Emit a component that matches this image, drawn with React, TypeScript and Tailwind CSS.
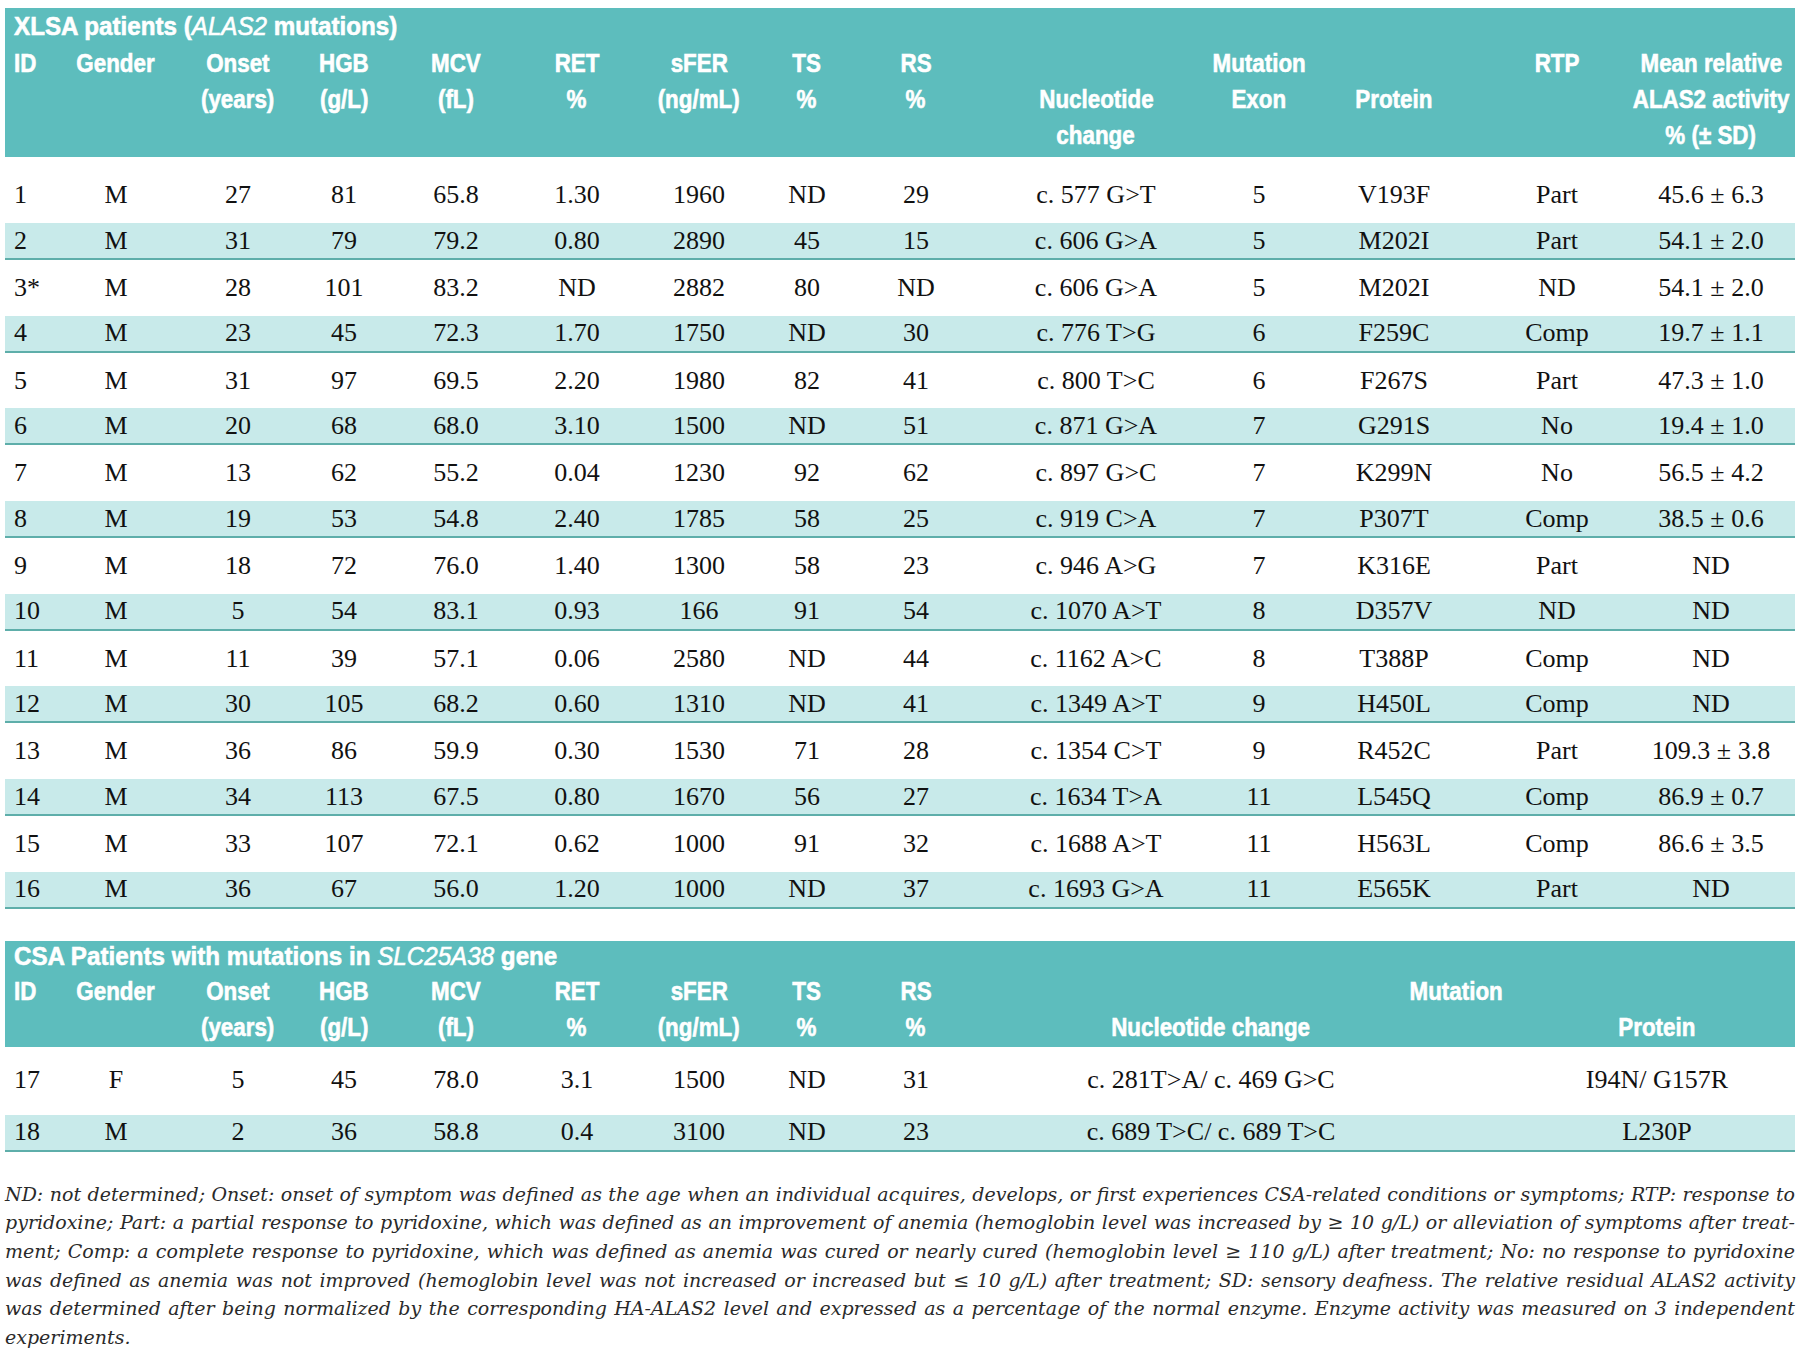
import React from "react";

const headFont = "font-['Liberation_Sans',sans-serif]";
const bodyFont = "font-['Liberation_Serif',serif]";

const grid1 =
  "grid grid-cols-[50px_122px_122px_90px_134px_108px_136px_80px_138px_222px_104px_166px_160px_148px]";
const grid2 =
  "grid grid-cols-[50px_122px_122px_90px_134px_108px_136px_80px_138px_452px_82px_276px]";

// header lines per column (3 lines for the first table)
const head1: string[][] = [
  ["ID", "", ""],
  ["Gender", "", ""],
  ["Onset", "(years)", ""],
  ["HGB", "(g/L)", ""],
  ["MCV", "(fL)", ""],
  ["RET", "%", ""],
  ["sFER", "(ng/mL)", ""],
  ["TS", "%", ""],
  ["RS", "%", ""],
  ["", "Nucleotide", "change"],
  ["Mutation", "Exon", ""],
  ["", "Protein", ""],
  ["RTP", "", ""],
  ["Mean relative", "ALAS2 activity", "% (± SD)"],
];

const head2: string[][] = [
  ["ID", ""],
  ["Gender", ""],
  ["Onset", "(years)"],
  ["HGB", "(g/L)"],
  ["MCV", "(fL)"],
  ["RET", "%"],
  ["sFER", "(ng/mL)"],
  ["TS", "%"],
  ["RS", "%"],
];

const rows1: string[][] = [
  ["1", "M", "27", "81", "65.8", "1.30", "1960", "ND", "29", "c. 577 G>T", "5", "V193F", "Part", "45.6 ± 6.3"],
  ["2", "M", "31", "79", "79.2", "0.80", "2890", "45", "15", "c. 606 G>A", "5", "M202I", "Part", "54.1 ± 2.0"],
  ["3*", "M", "28", "101", "83.2", "ND", "2882", "80", "ND", "c. 606 G>A", "5", "M202I", "ND", "54.1 ± 2.0"],
  ["4", "M", "23", "45", "72.3", "1.70", "1750", "ND", "30", "c. 776 T>G", "6", "F259C", "Comp", "19.7 ± 1.1"],
  ["5", "M", "31", "97", "69.5", "2.20", "1980", "82", "41", "c. 800 T>C", "6", "F267S", "Part", "47.3 ± 1.0"],
  ["6", "M", "20", "68", "68.0", "3.10", "1500", "ND", "51", "c. 871 G>A", "7", "G291S", "No", "19.4 ± 1.0"],
  ["7", "M", "13", "62", "55.2", "0.04", "1230", "92", "62", "c. 897 G>C", "7", "K299N", "No", "56.5 ± 4.2"],
  ["8", "M", "19", "53", "54.8", "2.40", "1785", "58", "25", "c. 919 C>A", "7", "P307T", "Comp", "38.5 ± 0.6"],
  ["9", "M", "18", "72", "76.0", "1.40", "1300", "58", "23", "c. 946 A>G", "7", "K316E", "Part", "ND"],
  ["10", "M", "5", "54", "83.1", "0.93", "166", "91", "54", "c. 1070 A>T", "8", "D357V", "ND", "ND"],
  ["11", "M", "11", "39", "57.1", "0.06", "2580", "ND", "44", "c. 1162 A>C", "8", "T388P", "Comp", "ND"],
  ["12", "M", "30", "105", "68.2", "0.60", "1310", "ND", "41", "c. 1349 A>T", "9", "H450L", "Comp", "ND"],
  ["13", "M", "36", "86", "59.9", "0.30", "1530", "71", "28", "c. 1354 C>T", "9", "R452C", "Part", "109.3 ± 3.8"],
  ["14", "M", "34", "113", "67.5", "0.80", "1670", "56", "27", "c. 1634 T>A", "11", "L545Q", "Comp", "86.9 ± 0.7"],
  ["15", "M", "33", "107", "72.1", "0.62", "1000", "91", "32", "c. 1688 A>T", "11", "H563L", "Comp", "86.6 ± 3.5"],
  ["16", "M", "36", "67", "56.0", "1.20", "1000", "ND", "37", "c. 1693 G>A", "11", "E565K", "Part", "ND"],
];

const rows2: string[][] = [
  ["17", "F", "5", "45", "78.0", "3.1", "1500", "ND", "31", "c. 281T>A/ c. 469 G>C", "", "I94N/ G157R"],
  ["18", "M", "2", "36", "58.8", "0.4", "3100", "ND", "23", "c. 689 T>C/ c. 689 T>C", "", "L230P"],
];

const notes = [
  "ND: not determined; Onset: onset of symptom was defined as the age when an individual acquires, develops, or first experiences CSA-related conditions or symptoms; RTP: response to",
  "pyridoxine; Part: a partial response to pyridoxine, which was defined as an improvement of anemia (hemoglobin level was increased by ≥ 10 g/L) or alleviation of symptoms after treat-",
  "ment; Comp: a complete response to pyridoxine, which was defined as anemia was cured or nearly cured (hemoglobin level ≥ 110 g/L) after treatment; No: no response to pyridoxine",
  "was defined as anemia was not improved (hemoglobin level was not increased or increased but ≤ 10 g/L) after treatment; SD: sensory deafness. The relative residual ALAS2 activity",
  "was determined after being normalized by the corresponding HA-ALAS2 level and expressed as a percentage of the normal enzyme. Enzyme activity was measured on 3 independent",
];

// condensed bold heading text (no narrow face installed, so squeeze Liberation Sans)
function HeadLine({
  text,
  left,
  h,
  title,
}: {
  text: React.ReactNode;
  left?: boolean;
  h: string;
  title?: boolean;
}) {
  return (
    <div className={`flex whitespace-nowrap ${h} ${left ? "justify-start pl-[9px]" : "justify-center"}`}>
      <span
        className={`inline-block ${title ? "scale-x-[0.93]" : "scale-x-[0.86]"} ${left ? "origin-left" : "origin-center"}`}
      >
        {text}
      </span>
    </div>
  );
}

function DataRow({ cells, grid, kind }: { cells: string[]; grid: string; kind: "first" | "white" | "stripe" }) {
  const rowCls =
    kind === "stripe"
      ? "h-[37px] bg-[#c8eaea] border-b-2 border-[#5eaeaa]"
      : kind === "first"
        ? "h-[66px] pt-[10px]"
        : "h-[55.7px]";
  return (
    <div className={`${grid} ${rowCls} items-center`}>
      {cells.map((c, i) => (
        <div
          key={i}
          className={`whitespace-nowrap leading-[30px] ${i === 0 ? "pl-[9px] text-left" : "text-center"}`}
        >
          {c}
        </div>
      ))}
    </div>
  );
}

export default function App() {
  return (
    <div className="w-[1800px] min-h-[1353px] bg-white px-[5px] pt-[8px] text-[#111]">
      {/* XLSA table */}
      <div
        className={`${headFont} bg-[#5dbdbd] text-white font-bold text-[26px] pb-[4px] [-webkit-text-stroke:0.6px_#fff]`}
      >
        <HeadLine
          left
          title
          h="h-[37px] leading-[37px]"
          text={
            <>
              XLSA patients (<span className="italic font-normal">ALAS2</span> mutations)
            </>
          }
        />
        <div className={grid1}>
          {head1.map((lines, i) => (
            <div key={i}>
              {lines.map((l, j) => (
                <HeadLine key={j} left={i === 0} h="h-[36px] leading-[36px]" text={l} />
              ))}
            </div>
          ))}
        </div>
      </div>

      <div className={`${bodyFont} text-[26px]`}>
        {rows1.map((r, i) => (
          <DataRow key={i} cells={r} grid={grid1} kind={i === 0 ? "first" : i % 2 === 1 ? "stripe" : "white"} />
        ))}
      </div>

      {/* CSA table */}
      <div
        className={`${headFont} mt-[32px] bg-[#5dbdbd] text-white font-bold text-[26px] pb-[2px] [-webkit-text-stroke:0.6px_#fff]`}
      >
        <HeadLine
          left
          title
          h="h-[30px] leading-[30px]"
          text={
            <>
              CSA Patients with mutations in <span className="italic font-normal">SLC25A38</span> gene
            </>
          }
        />
        <div className={`${grid2} grid-rows-[36px_36px] pt-[2px]`}>
          {head2.map((lines, i) => (
            <div key={i} className="row-span-2">
              {lines.map((l, j) => (
                <HeadLine key={j} left={i === 0} h="h-[36px] leading-[36px]" text={l} />
              ))}
            </div>
          ))}
          <div className="col-span-3 pl-[132px]">
            <HeadLine h="h-[36px] leading-[36px]" text="Mutation" />
          </div>
          <HeadLine h="h-[36px] leading-[36px]" text="Nucleotide change" />
          <div />
          <HeadLine h="h-[36px] leading-[36px]" text="Protein" />
        </div>
      </div>

      <div className={`${bodyFont} text-[26px]`}>
        <div className={`${grid2} h-[68px] items-center pb-[2px]`}>
          {rows2[0].map((c, i) => (
            <div key={i} className={`whitespace-nowrap ${i === 0 ? "pl-[9px] text-left" : "text-center"}`}>
              {c}
            </div>
          ))}
        </div>
        <DataRow cells={rows2[1]} grid={grid2} kind="stripe" />
      </div>

      {/* Footnote */}
      <div className="mt-[28px] font-['DejaVu_Serif',serif] italic text-[19px] leading-[28.6px] text-[#2a2a2a]">
        {notes.map((n, i) => (
          <div key={i} className="text-justify [text-align-last:justify]">
            {n}
          </div>
        ))}
        <div>experiments.</div>
      </div>
    </div>
  );
}
